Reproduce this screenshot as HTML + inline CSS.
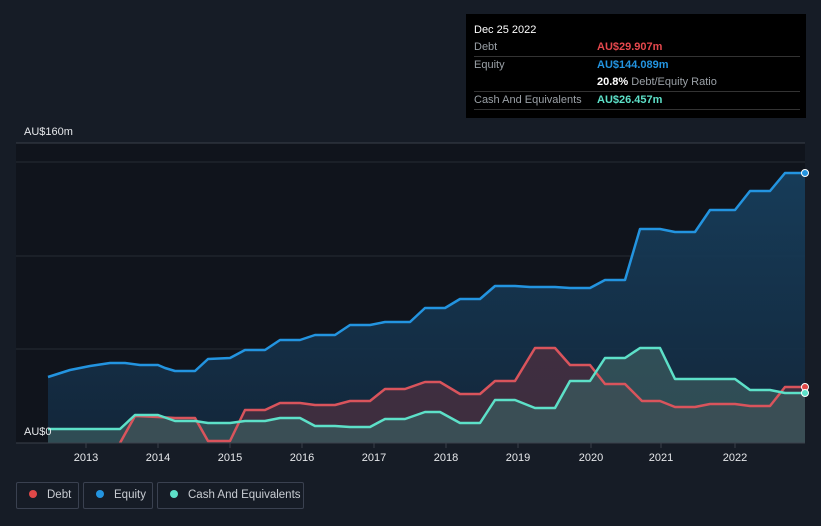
<!DOCTYPE html>
<html style="overflow:hidden"><head><style>
html,body{margin:0;width:821px;height:526px;overflow:hidden}
body{background:#161c26;font-family:"Liberation Sans",sans-serif;position:relative}
.tt{position:absolute;left:466px;top:14px;width:340px;height:104px;background:#000;color:#fff;font-size:11px}
.tt .r{position:absolute;left:8px;right:6px;border-bottom:1px solid #333;height:17px;line-height:17px}
.g{color:#9aa0a6}
.leg{position:absolute;top:482px;height:27px;border:1px solid #3a4150;border-radius:2px;color:#c8ccd2;font-size:11.5px;line-height:25px;box-sizing:border-box;white-space:nowrap;overflow:hidden}
.dot{display:inline-block;width:8px;height:8px;border-radius:50%;margin:0 10px 0 12px}
</style></head><body>
<svg width="821" height="526" style="position:absolute;left:0;top:0">
<defs>
<linearGradient id="ge" x1="0" y1="0" x2="0" y2="1"><stop offset="0" stop-color="#17405f" stop-opacity=".9"/><stop offset="1" stop-color="#13283d" stop-opacity=".9"/></linearGradient>
</defs>
<rect x="16" y="143" width="789" height="300" fill="#10141c"/>
<line x1="16" y1="143" x2="805" y2="143" stroke="#3a404a"/>
<line x1="16" y1="162" x2="805" y2="162" stroke="#262b34"/>
<line x1="16" y1="256" x2="805" y2="256" stroke="#262b34"/>
<line x1="16" y1="349" x2="805" y2="349" stroke="#262b34"/>
<polygon fill="url(#ge)" points="48,443 48,377 70,370 90,366 110,363 125,363 140,365 158,365 165,368 175,371 195,371 208,359 230,358 245,350 265,350 280,340 300,340 315,335 335,335 350,325 370,325 385,322 410,322 425,308 445,308 460,299 480,299 495,286 515,286 530,287 555,287 570,288 590,288 605,280 625,280 640,229 660,229 675,232 695,232 710,210 735,210 750,191 770,191 785,173 805,173 805,443"/>
<polygon fill="#4a3040" fill-opacity=".8" points="120,443 135,416 158,417 175,418 195,418 208,441 230,441 245,410 265,410 280,403 300,403 315,405 335,405 350,401 370,401 385,389 405,389 425,382 440,382 460,394 480,394 495,381 515,381 535,348 555,348 570,365 590,365 605,384 625,384 642,401 660,401 675,407 695,407 710,404 735,404 750,406 770,406 785,387 805,387 805,443"/>
<polygon fill="#3a5a5e" fill-opacity=".75" points="48,443 48,429 120,429 135,415 158,415 175,421 195,421 208,423 230,423 245,421 265,421 280,418 300,418 315,426 335,426 350,427 370,427 385,419 405,419 425,412 440,412 460,423 480,423 495,400 515,400 535,408 555,408 570,381 590,381 605,358 625,358 640,348 660,348 675,379 695,379 735,379 750,390 770,390 785,393 805,393 805,443"/>
<polyline fill="none" stroke="#2394e0" stroke-width="2.5" stroke-linejoin="round" points="48,377 70,370 90,366 110,363 125,363 140,365 158,365 165,368 175,371 195,371 208,359 230,358 245,350 265,350 280,340 300,340 315,335 335,335 350,325 370,325 385,322 410,322 425,308 445,308 460,299 480,299 495,286 515,286 530,287 555,287 570,288 590,288 605,280 625,280 640,229 660,229 675,232 695,232 710,210 735,210 750,191 770,191 785,173 805,173"/>
<polyline fill="none" stroke="#d9545c" stroke-width="2.5" stroke-linejoin="round" points="120,443 135,416 158,417 175,418 195,418 208,441 230,441 245,410 265,410 280,403 300,403 315,405 335,405 350,401 370,401 385,389 405,389 425,382 440,382 460,394 480,394 495,381 515,381 535,348 555,348 570,365 590,365 605,384 625,384 642,401 660,401 675,407 695,407 710,404 735,404 750,406 770,406 785,387 805,387"/>
<polyline fill="none" stroke="#5de0c8" stroke-width="2.5" stroke-linejoin="round" points="48,429 120,429 135,415 158,415 175,421 195,421 208,423 230,423 245,421 265,421 280,418 300,418 315,426 335,426 350,427 370,427 385,419 405,419 425,412 440,412 460,423 480,423 495,400 515,400 535,408 555,408 570,381 590,381 605,358 625,358 640,348 660,348 675,379 695,379 735,379 750,390 770,390 785,393 805,393"/>
<circle cx="805" cy="173" r="3.5" fill="#2394e0" stroke="#fff"/>
<circle cx="805" cy="387" r="3.5" fill="#e04848" stroke="#fff"/>
<circle cx="805" cy="393" r="3.5" fill="#5de0c8" stroke="#fff"/>
<line x1="16" y1="443" x2="805" y2="443" stroke="#3a404a"/>
<g stroke="#3a404a"><line x1="86" y1="443" x2="86" y2="448"/><line x1="158" y1="443" x2="158" y2="448"/><line x1="230" y1="443" x2="230" y2="448"/><line x1="302" y1="443" x2="302" y2="448"/><line x1="374" y1="443" x2="374" y2="448"/><line x1="446" y1="443" x2="446" y2="448"/><line x1="518" y1="443" x2="518" y2="448"/><line x1="591" y1="443" x2="591" y2="448"/><line x1="661" y1="443" x2="661" y2="448"/><line x1="735" y1="443" x2="735" y2="448"/></g>
<g fill="#e6e8eb" font-size="11" text-anchor="middle" font-family="Liberation Sans,sans-serif">
<text x="86" y="461">2013</text><text x="158" y="461">2014</text><text x="230" y="461">2015</text><text x="302" y="461">2016</text><text x="374" y="461">2017</text><text x="446" y="461">2018</text><text x="518" y="461">2019</text><text x="591" y="461">2020</text><text x="661" y="461">2021</text><text x="735" y="461">2022</text>
</g>
<text x="24" y="135" fill="#e6e8eb" font-size="11">AU$160m</text>
<text x="24" y="435" fill="#e6e8eb" font-size="11">AU$0</text>
</svg>
<div class="tt">
<div style="position:absolute;left:8px;top:10px;font-size:11px">Dec 25 2022</div>
<div class="r" style="top:25px"><span class="g">Debt</span><span style="position:absolute;left:123px;color:#e5484d;font-weight:bold">AU$29.907m</span></div>
<div class="r" style="top:43px;border:none"><span class="g">Equity</span><span style="position:absolute;left:123px;color:#2394e0;font-weight:bold">AU$144.089m</span></div>
<div class="r" style="top:60px"><span style="position:absolute;left:123px"><b>20.8%</b> <span class="g">Debt/Equity Ratio</span></span></div>
<div class="r" style="top:78px"><span class="g">Cash And Equivalents</span><span style="position:absolute;left:123px;color:#5de0c8;font-weight:bold">AU$26.457m</span></div>
</div>
<div class="leg" style="left:16px;width:63px"><span class="dot" style="background:#e04848"></span>Debt</div>
<div class="leg" style="left:83px;width:70px"><span class="dot" style="background:#2394e0"></span>Equity</div>
<div class="leg" style="left:157px;width:147px"><span class="dot" style="background:#5de0c8"></span>Cash And Equivalents</div>
</body></html>
